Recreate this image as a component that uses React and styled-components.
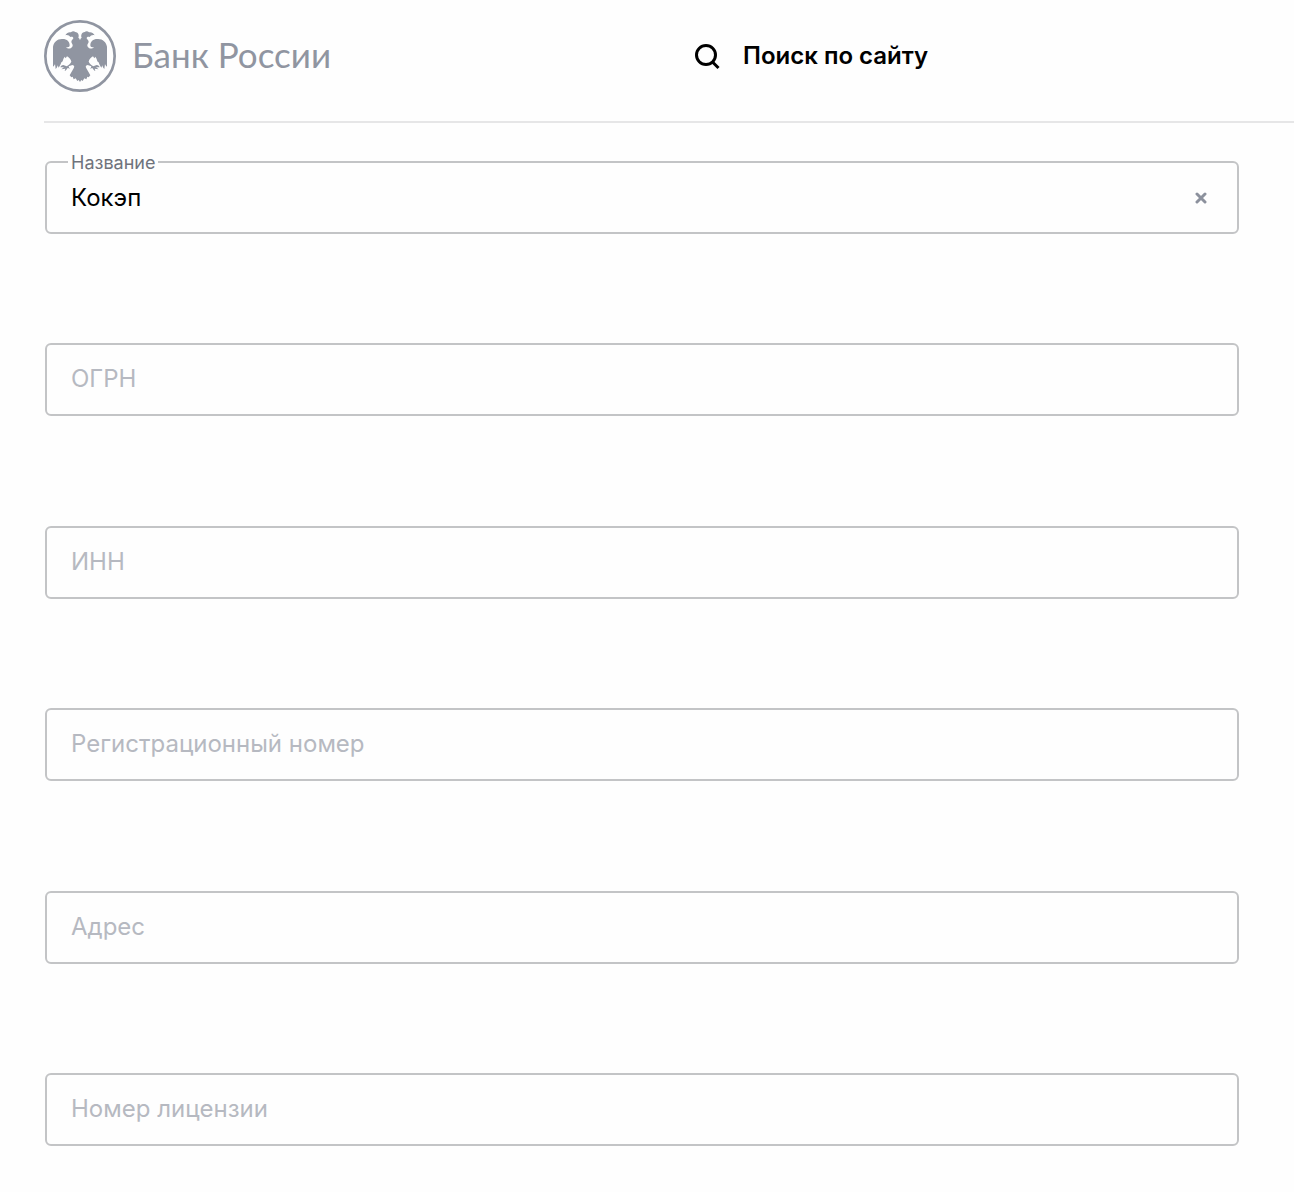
import React, { useRef, useState } from 'react';
import styled, { createGlobalStyle } from 'styled-components';

const GlobalStyle = createGlobalStyle`
  *, *::before, *::after { box-sizing: border-box; }
  body {
    margin: 0;
    background: #fefefe;
    color: #000;
    font-family: Inter, "Noto Sans", sans-serif;
  }
`;

const Page = styled.div`
  display: flex;
  flex-direction: column;
  min-height: 100vh;
`;

const Header = styled.header`
  display: grid;
  grid-template-columns: 52% 1fr;
  align-items: center;
  margin-left: 44px;
  padding: 20px 0 29px;
  border-bottom: 2px solid #e6e6e7;
`;

const Brand = styled.a`
  display: flex;
  align-items: center;
  gap: 16px;
  color: #9095a1;
  text-decoration: none;
`;

const Emblem = styled.svg`
  flex: none;
  width: 72px;
  height: 72px;
`;

const BrandName = styled.span`
  padding-bottom: 4px;
  font-family: Lato, "Open Sans", sans-serif;
  font-size: 35px;
  line-height: 40px;
  white-space: nowrap;
`;

const SearchButton = styled.button`
  display: flex;
  align-items: center;
  justify-self: start;
  gap: 22px;
  padding: 0;
  border: 0;
  background: none;
  color: #000;
  font: 600 24px/32px Inter, "Noto Sans", sans-serif;
  cursor: pointer;

  svg { width: 27px; height: 27px; }
`;

const Form = styled.form`
  flex: 1;
  display: flex;
  flex-direction: column;
  justify-content: space-between;
  gap: 40px;
  padding: 38px 55px 46px 45px;
`;

const FieldBox = styled.div`
  position: relative;
  display: flex;
  align-items: center;
  height: 73px;
  border: 2px solid #c3c4c6;
  border-radius: 6px;
`;

const Input = styled.input`
  flex: 1;
  min-width: 0;
  height: 100%;
  padding: 0 24px;
  border: 0;
  outline: 0;
  background: transparent;
  color: #000;
  font: 400 24px/32px Inter, "Noto Sans", sans-serif;
`;

const Label = styled.label`
  position: absolute;
  top: ${(p) => (p.$raised ? '-12px' : '18px')};
  left: 21px;
  padding: 0 3px;
  background: #fefefe;
  color: ${(p) => (p.$raised ? '#6f737c' : '#b6b9c1')};
  font-size: ${(p) => (p.$raised ? '18px' : '24px')};
  line-height: ${(p) => (p.$raised ? '24px' : '32px')};
  pointer-events: none;
`;

const ClearButton = styled.button`
  display: flex;
  margin-right: 24px;
  padding: 6px;
  border: 0;
  background: none;
  color: #8c919d;
  cursor: pointer;
`;

const eagleHalf =
  'M120 73 C119 69 118 67 115 65 C119 57 113 48 106 48 C102 44 96 45 93 49 C87 47 80 51 76 58 C83 56 88 59 91 63 C95 62 99 62 100 66 C101 70 94 71 94 77 C94 82 99 84 98 89 C96 98 84 101 78 93 C85 95 89 93 89 88 C89 77 81 69 68 69 C52 68 42 78 39 92 L39 152 C43 149 44 147 45 144 L47 159 C51 156 52 152 53 148 L56 155 C60 150 62 145 64 139 C67 138 69 134 70 129 L74 122 L77 127 L81 121 C87 124 93 130 94 137 C91 143 85 148 80 151 L70 147 C65 147 62 150 61 154 L72 154 L64 160 L76 158 L74 165 C79 163 81 158 84 155 L89 160 L86 151 L97 147 C103 148 104 151 101 157 L89 178 L94 184 L98 182 L101 190 L107 187 L112 195 L116 192 L120 198 Z';

function BankEmblem() {
  return (
    <Emblem viewBox="12 12 216 216" aria-hidden="true">
      <circle cx="120" cy="120" r="104" fill="none" stroke="currentColor" strokeWidth="8" />
      <g fill="currentColor">
        <path d={eagleHalf} />
        <path d={eagleHalf} transform="translate(240 0) scale(-1 1)" />
      </g>
    </Emblem>
  );
}

function Field({ id, label, initial = '' }) {
  const [value, setValue] = useState(initial);
  const [focused, setFocused] = useState(false);
  const input = useRef(null);
  const clear = () => {
    setValue('');
    input.current.focus();
  };
  return (
    <FieldBox>
      <Input
        ref={input}
        id={id}
        name={id}
        type="text"
        autoComplete="off"
        value={value}
        onChange={(e) => setValue(e.target.value)}
        onFocus={() => setFocused(true)}
        onBlur={() => setFocused(false)}
      />
      <Label htmlFor={id} $raised={focused || value !== ''}>{label}</Label>
      {value !== '' && (
        <ClearButton type="button" aria-label="Очистить" onClick={clear}>
          <svg width="12" height="12" viewBox="0 0 12 12" aria-hidden="true">
            <path d="M2 2 L10 10 M10 2 L2 10" stroke="currentColor" strokeWidth="3" strokeLinecap="round" />
          </svg>
        </ClearButton>
      )}
    </FieldBox>
  );
}

const fields = [
  { id: 'name', label: 'Название', initial: 'Кокэп' },
  { id: 'ogrn', label: 'ОГРН' },
  { id: 'inn', label: 'ИНН' },
  { id: 'regnum', label: 'Регистрационный номер' },
  { id: 'address', label: 'Адрес' },
  { id: 'license', label: 'Номер лицензии' },
];

export default function App() {
  return (
    <Page>
      <GlobalStyle />
      <Header>
        <Brand href="#">
          <BankEmblem />
          <BrandName>Банк России</BrandName>
        </Brand>
        <SearchButton type="button">
          <svg viewBox="0 0 27 27" fill="none" stroke="currentColor" strokeWidth="3" aria-hidden="true">
            <circle cx="12" cy="12" r="9.5" />
            <path d="M18 18.5 L24.5 25" />
          </svg>
          Поиск по сайту
        </SearchButton>
      </Header>
      <Form>
        {fields.map((f) => (
          <Field key={f.id} {...f} />
        ))}
      </Form>
    </Page>
  );
}
